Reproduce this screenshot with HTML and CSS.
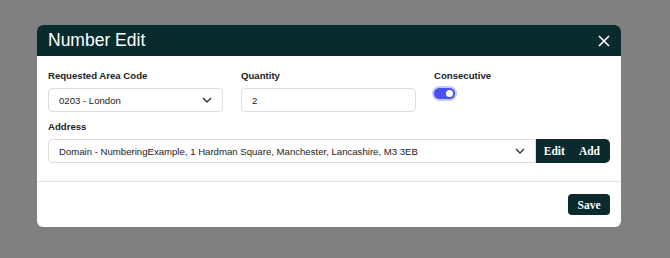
FILE: index.html
```html
<!DOCTYPE html>
<html lang="en">
<head>
  <meta charset="UTF-8">
  <title>Number Edit</title>
  <link rel="stylesheet" href="styles.css">
</head>
<body>
  <div class="modal">
    <div class="modal-header">
      <h2>Number Edit</h2>
      <span class="close-btn">
        <svg width="12" height="12" viewBox="0 0 12 12"><path d="M1 1 L11 11 M11 1 L1 11" stroke="#fff" stroke-width="1.6" fill="none"/></svg>
      </span>
    </div>
    <div class="modal-body">
      <div class="row">
        <div class="field">
          <label>Requested Area Code</label>
          <div class="select">
            <span>0203 - London</span>
            <svg class="chevron" width="10" height="6" viewBox="0 0 10 6"><path d="M1 1 L5 5 L9 1" stroke="#333" stroke-width="1.4" fill="none"/></svg>
          </div>
        </div>
        <div class="field">
          <label>Quantity</label>
          <div class="input"><span>2</span></div>
        </div>
        <div class="field">
          <label>Consecutive</label>
          <div class="toggle"><span class="knob"></span></div>
        </div>
      </div>
      <div class="address">
        <label>Address</label>
        <div class="input-group">
          <div class="select wide">
            <span>Domain - NumberingExample, 1 Hardman Square, Manchester, Lancashire, M3 3EB</span>
            <svg class="chevron" width="10" height="6" viewBox="0 0 10 6"><path d="M1 1 L5 5 L9 1" stroke="#333" stroke-width="1.4" fill="none"/></svg>
          </div>
          <button class="btn btn-group">Edit</button>
          <button class="btn btn-group last">Add</button>
        </div>
      </div>
    </div>
    <div class="modal-footer">
      <button class="btn btn-save">Save</button>
    </div>
  </div>
</body>
</html>
```

FILE: styles.css
```css
* {
  margin: 0;
  padding: 0;
  box-sizing: border-box;
}

body {
  font-family: 'Liberation Sans', Arial, sans-serif;
  background: #808080;
  width: 670px;
  height: 258px;
  overflow: hidden;
}

.modal {
  width: 584px;
  margin: 25px 0 0 37px;
  background: #fff;
  border-radius: 6px;
  overflow: hidden;
}

.modal-header {
  height: 31px;
  background: #0a2b2e;
  display: flex;
  align-items: center;
  justify-content: space-between;
  padding: 0 11px;
}

.modal-header h2 {
  font-size: 17.5px;
  font-weight: normal;
  color: #fff;
}

.close-btn {
  display: flex;
}

.modal-body {
  padding: 13px 11px 18px;
  border-bottom: 1px solid #e4e4e4;
}

.row {
  display: flex;
  gap: 18px;
}

.field {
  width: 175px;
}

label {
  display: block;
  font-size: 9.6px;
  line-height: 13px;
  font-weight: bold;
  color: #222;
  margin-bottom: 6px;
}

.select,
.input {
  height: 24px;
  border: 1px solid #dcdcdc;
  border-radius: 4px;
  display: flex;
  align-items: center;
  justify-content: space-between;
  padding: 0 10px;
  font-size: 9.6px;
  color: #222;
}

.toggle {
  width: 21px;
  height: 11px;
  margin-top: 4px;
  border-radius: 6px;
  background: #4a4ff0;
  box-shadow: 0 0 0 2px #c5c8fb;
  position: relative;
}

.knob {
  position: absolute;
  right: 2px;
  top: 2px;
  width: 7px;
  height: 7px;
  border-radius: 50%;
  background: #fff;
}

.address {
  margin-top: 8px;
}

.input-group {
  display: flex;
  height: 24px;
}

.select.wide {
  flex: 1;
  border-radius: 4px 0 0 4px;
}

.btn {
  font-family: 'Liberation Serif', 'Times New Roman', serif;
  font-weight: bold;
  font-size: 11.5px;
  color: #fff;
  background: #0b2a2e;
  border: none;
}

.btn-group {
  padding: 0 8px;
}

.btn-group.last {
  border-radius: 0 5px 5px 0;
  padding: 0 10px 0 6px;
}

.modal-footer {
  display: flex;
  justify-content: flex-end;
  padding: 12px 11px 12px;
}

.btn-save {
  width: 42px;
  height: 21px;
  border-radius: 4px;
}
```
